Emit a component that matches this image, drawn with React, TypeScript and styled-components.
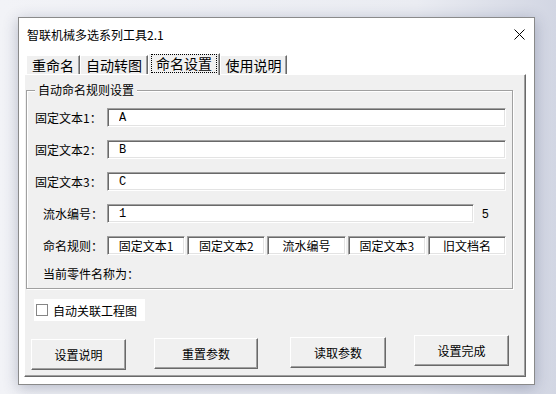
import styled, { createGlobalStyle } from "styled-components";

const GlobalStyle = createGlobalStyle`
  html, body {
    margin: 0;
    padding: 0;
  }
  body {
    width: 556px;
    height: 394px;
    overflow: hidden;
    background: linear-gradient(90deg, #f2f3f7 0%, #eaecf2 75%, #d2d6e3 100%);
    font-family: "Noto Sans CJK SC", sans-serif;
    color: #000;
  }
`;

const tabs = [
  { label: "重命名", w: 54 },
  { label: "自动转图", w: 68 },
  { label: "命名设置", w: 72, active: true },
  { label: "使用说明", w: 67 },
];

const fixedTexts = [
  { label: "固定文本1：", value: "A" },
  { label: "固定文本2：", value: "B" },
  { label: "固定文本3：", value: "C" },
];

const rules = ["固定文本1", "固定文本2", "流水编号", "固定文本3", "旧文档名"];

const buttons = [
  { label: "设置说明", w: 95, ml: 0, dy: 4 },
  { label: "重置参数", w: 104, ml: 28, dy: 3 },
  { label: "读取参数", w: 96, ml: 32, dy: 2 },
  { label: "设置完成", w: 95, ml: 28, dy: 0 },
];

const App = () => {
  return (
    <>
      <GlobalStyle />
      <Window>
        <TitleBar>
          <Title>智联机械多选系列工具2.1</Title>
          <Close>
            <svg width="11" height="11" viewBox="0 0 11 11">
              <path d="M0.5 0.5 L10.5 10.5 M10.5 0.5 L0.5 10.5" stroke="#000" strokeWidth="1" />
            </svg>
          </Close>
        </TitleBar>

        <Body>
          <TabStrip>
            {tabs.map((t) => (
              <Tab key={t.label} $w={t.w} $active={!!t.active}>
                {t.active ? <Focus>{t.label}</Focus> : t.label}
              </Tab>
            ))}
          </TabStrip>

          <Panel>
            <Group>
              <Legend>自动命名规则设置</Legend>
              <Fields>
                {fixedTexts.map((f) => (
                  <Row key={f.label}>
                    <Label $indent={8}>{f.label}</Label>
                    <TextBox readOnly value={f.value} />
                  </Row>
                ))}

                <Row>
                  <Label $indent={16}>流水编号：</Label>
                  <SerialLine>
                    <TextBox readOnly value="1" />
                    <Count>5</Count>
                  </SerialLine>
                </Row>

                <Row>
                  <Label $indent={16}>命名规则：</Label>
                  <RuleLine>
                    {rules.map((r) => (
                      <RuleBox key={r}>{r}</RuleBox>
                    ))}
                  </RuleLine>
                </Row>

                <Status>当前零件名称为：</Status>
              </Fields>
            </Group>

            <Check>
              <Box />
              自动关联工程图
            </Check>

            <ButtonRow>
              {buttons.map((b) => (
                <Button key={b.label} $w={b.w} $ml={b.ml} $dy={b.dy}>
                  {b.label}
                </Button>
              ))}
            </ButtonRow>
          </Panel>
        </Body>
      </Window>
    </>
  );
};

export default App;

const Window = styled.div`
  box-sizing: border-box;
  width: 517px;
  height: 368px;
  margin: 17px 0 0 18px;
  display: flex;
  flex-direction: column;
  background: #fff;
  border: 1px solid #8a8a8a;
  box-shadow: 0 3px 14px rgba(40, 50, 90, 0.3);
`;
const TitleBar = styled.div`
  height: 33px;
  display: flex;
  align-items: center;
  justify-content: space-between;
  padding: 0 9px 0 8px;
`;
const Title = styled.div`
  font-size: 12px;
  line-height: 14px;
  padding-top: 1px;
`;
const Close = styled.div`
  width: 11px;
  height: 11px;
  display: flex;
`;
const Body = styled.div`
  flex: 1;
  display: flex;
  flex-direction: column;
  padding: 2px 8px 7px 5px;
`;
const TabStrip = styled.div`
  height: 21px;
  display: flex;
  align-items: flex-end;
  padding-left: 2px;
`;
const Tab = styled.div<{ $w: number; $active: boolean }>`
  box-sizing: border-box;
  width: ${(p) => p.$w}px;
  height: ${(p) => (p.$active ? 22 : 19)}px;
  margin-bottom: ${(p) => (p.$active ? -1 : 0)}px;
  position: relative;
  z-index: ${(p) => (p.$active ? 1 : 0)};
  display: flex;
  align-items: center;
  justify-content: center;
  padding-bottom: ${(p) => (p.$active ? 3 : 0)}px;
  background: #f0f0f0;
  border-top: 1px solid #fff;
  border-left: 1px solid #fff;
  border-right: 1px solid #696969;
  box-shadow: inset -1px 0 0 #a0a0a0;
  font-size: 14px;
  line-height: 15px;
`;
const Focus = styled.span`
  padding: 1px 4px;
  border: 1px dotted #000;
`;
const Panel = styled.div`
  box-sizing: border-box;
  height: 303px;
  display: flex;
  flex-direction: column;
  padding: 15px 0 0 1px;
  background: #f0f0f0;
  border-top: 1px solid #fff;
  border-left: 1px solid #fff;
  border-right: 1px solid #696969;
  border-bottom: 1px solid #696969;
  box-shadow: inset -1px -1px 0 #a0a0a0;
`;
const Group = styled.div`
  position: relative;
  box-sizing: border-box;
  width: 487px;
  height: 199px;
  padding: 17px 6px 0 0;
  border: 1px solid #a0a0a0;
  box-shadow: inset 1px 1px 0 #fff, 1px 1px 0 #fff;
`;
const Legend = styled.span`
  position: absolute;
  top: -8px;
  left: 8px;
  padding: 0 3px;
  background: #f0f0f0;
  font-size: 12px;
  line-height: 14px;
`;
const Fields = styled.div`
  display: grid;
  grid-template-columns: 80px 1fr;
  row-gap: 13px;
  align-items: center;
`;
const Row = styled.div`
  display: contents;
`;
const Label = styled.div<{ $indent: number }>`
  padding-left: ${(p) => p.$indent}px;
  font-size: 12px;
  line-height: 19px;
  white-space: nowrap;
`;
const sunken = `
  box-sizing: border-box;
  height: 19px;
  background: #fff;
  border-top: 1px solid #a0a0a0;
  border-left: 1px solid #a0a0a0;
  border-right: 1px solid #fff;
  border-bottom: 1px solid #fff;
  box-shadow: inset 1px 1px 0 #696969, inset -1px -1px 0 #e3e3e3;
`;
const TextBox = styled.input`
  ${sunken}
  width: 100%;
  margin: 0;
  padding: 0 0 0 11px;
  outline: none;
  font-family: "Liberation Mono", "Noto Sans CJK SC", monospace;
  font-size: 12px;
  color: #000;
`;
const SerialLine = styled.div`
  display: flex;
  align-items: center;
`;
const Count = styled.span`
  flex: none;
  width: 24px;
  padding-left: 8px;
  font-family: "Liberation Sans", sans-serif;
  font-size: 12px;
`;
const RuleLine = styled.div`
  display: flex;
  gap: 2px;
`;
const RuleBox = styled.div`
  ${sunken}
  flex: 1;
  display: flex;
  align-items: center;
  justify-content: center;
  font-size: 12px;
  line-height: 17px;
`;
const Status = styled.div`
  grid-column: 1 / span 2;
  margin-top: -4px;
  padding-left: 16px;
  font-size: 12px;
  line-height: 19px;
`;
const Check = styled.div`
  box-sizing: border-box;
  width: 111px;
  height: 22px;
  margin: 10px 0 0 8px;
  padding-left: 2px;
  display: flex;
  align-items: center;
  gap: 5px;
  background: #fff;
  font-size: 12px;
`;
const Box = styled.span`
  box-sizing: border-box;
  width: 12px;
  height: 12px;
  border: 1px solid #858585;
  background: #fff;
`;
const ButtonRow = styled.div`
  display: flex;
  align-items: flex-start;
  margin-top: 14px;
  padding-left: 5px;
`;
const Button = styled.div<{ $w: number; $ml: number; $dy: number }>`
  box-sizing: border-box;
  width: ${(p) => p.$w}px;
  height: 31px;
  margin-left: ${(p) => p.$ml}px;
  margin-top: ${(p) => p.$dy}px;
  display: flex;
  align-items: center;
  justify-content: center;
  background: #f0f0f0;
  border-top: 1px solid #fff;
  border-left: 1px solid #fff;
  border-right: 1px solid #696969;
  border-bottom: 1px solid #696969;
  box-shadow: inset -1px -1px 0 #a0a0a0;
  font-size: 12px;
`;
